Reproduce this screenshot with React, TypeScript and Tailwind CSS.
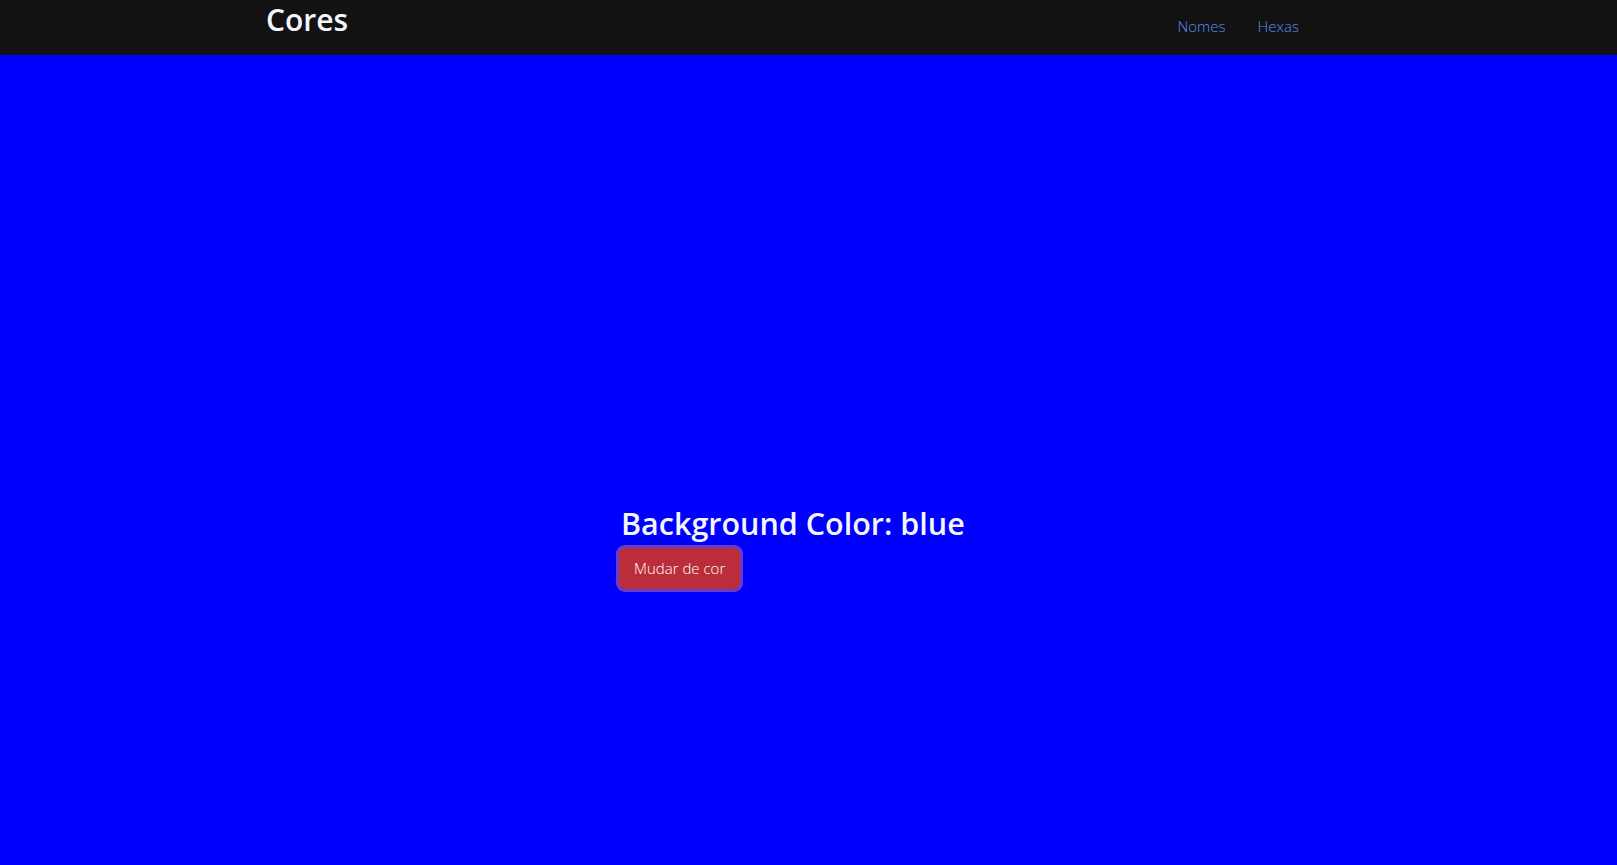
import React, { useState } from 'react';

const colors = ['blue', 'red', 'green', 'purple', 'orange'];

const App: React.FC = () => {
  const [index, setIndex] = useState(0);
  const color = colors[index];

  return (
    <div className="min-h-screen flex flex-col font-['Open_Sans',sans-serif]">
      <header className="h-[55px] bg-[#121212] flex items-start justify-between pl-[266px] pr-[318px]">
        <h1 className="text-[30px] leading-[38px] font-semibold text-[#f4f6fb] mt-[1px]">Cores</h1>
        <nav className="flex gap-[32px] pt-[15px] text-[15px] font-light text-[#5b8ff0]">
          <a href="#">Nomes</a>
          <a href="#">Hexas</a>
        </nav>
      </header>

      <main className="flex-1 bg-[#0000ff] pl-[621px] pt-[449px]">
        <h2 className="text-[30.5px] leading-[38px] font-semibold text-[#f4f6fb]">
          Background Color: {color}
        </h2>
        <button
          onClick={() => setIndex((index + 1) % colors.length)}
          className="mt-[6px] h-[41px] px-[15px] rounded-[6px] bg-[#bb2d3b] text-white text-[15px] font-light ring-[3px] ring-[#6c3bc4] ml-[-2px]"
        >
          Mudar de cor
        </button>
      </main>
    </div>
  );
};

export default App;
